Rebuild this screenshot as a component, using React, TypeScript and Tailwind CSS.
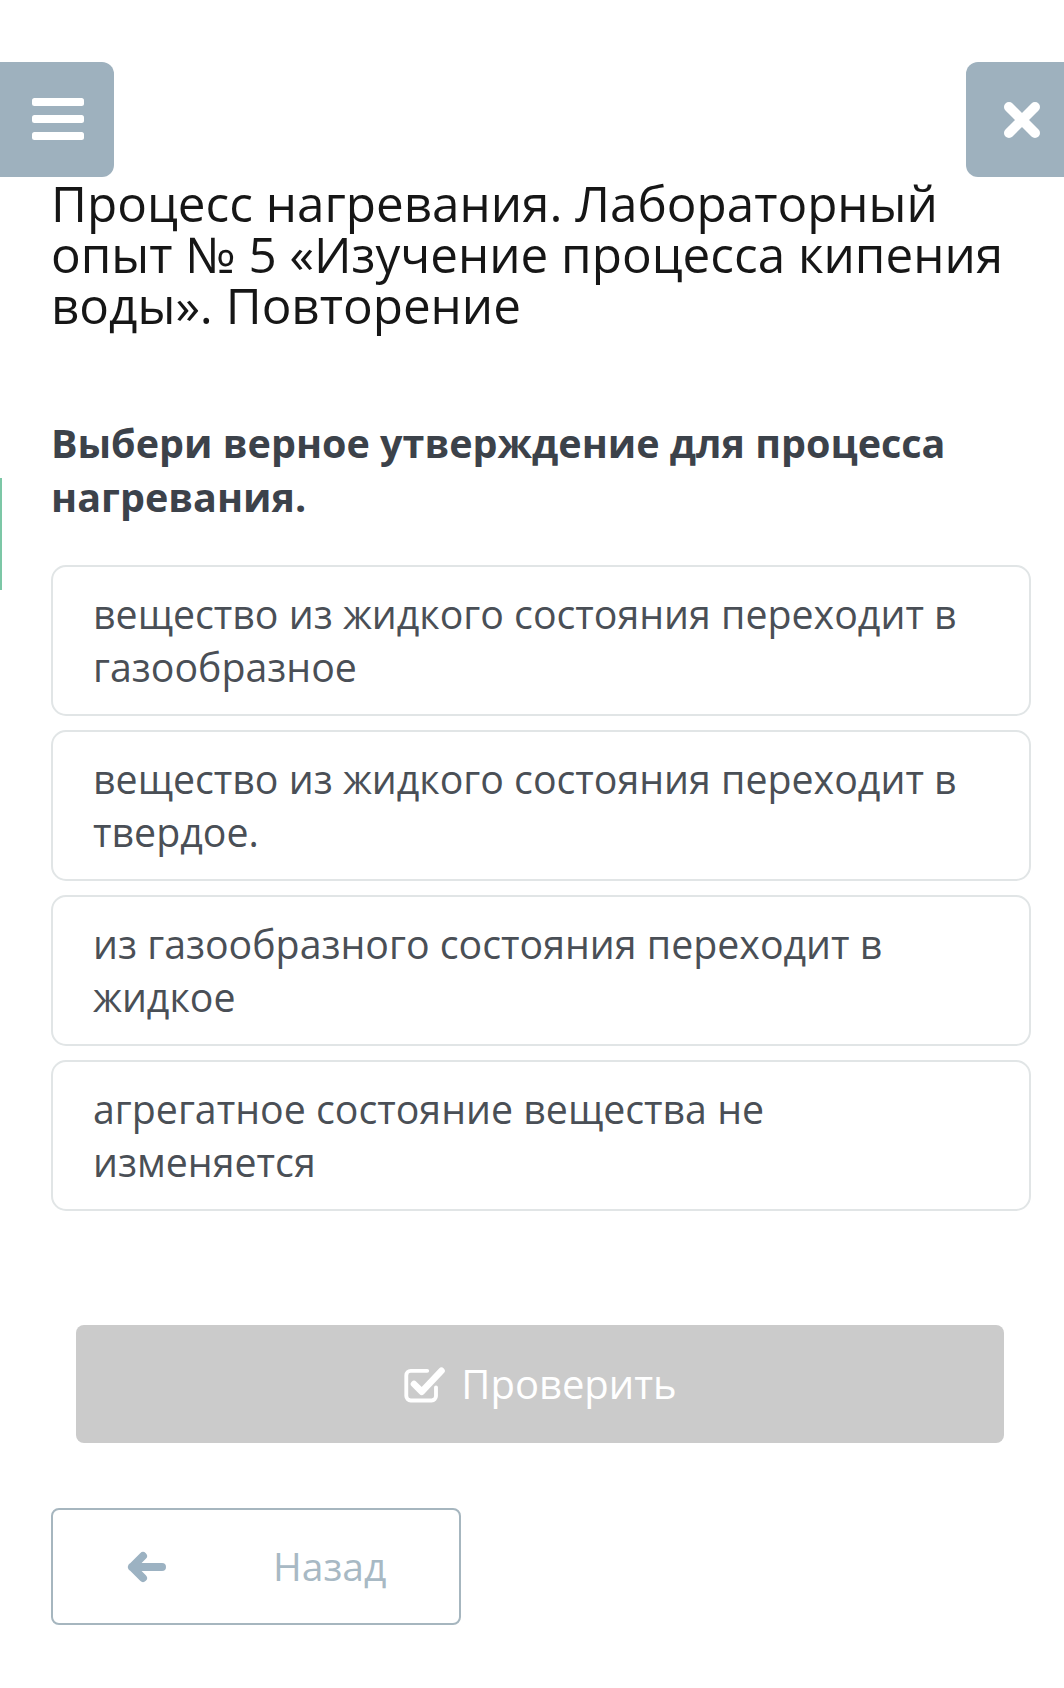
const options = [
  "вещество из жидкого состояния переходит в газообразное",
  "вещество из жидкого состояния переходит в твердое.",
  "из газообразного состояния переходит в жидкое",
  "агрегатное состояние вещества не изменяется",
];

const MenuIcon = () => (
  <svg width="52" height="44" viewBox="0 0 52 44" fill="#ffffff">
    <rect x="0" y="0" width="52" height="8" rx="2.5" />
    <rect x="0" y="17" width="52" height="8" rx="2.5" />
    <rect x="0" y="34" width="52" height="8" rx="2.5" />
  </svg>
);

const CloseIcon = () => (
  <svg width="40" height="40" viewBox="0 0 40 40">
    <path
      d="M7 7 L33 33 M33 7 L7 33"
      stroke="#ffffff"
      strokeWidth="10"
      strokeLinecap="round"
    />
  </svg>
);

const CheckSquare = () => (
  <svg width="44" height="40" viewBox="0 0 40 36" fill="none">
    <path
      d="M30 21 V29 A4 4 0 0 1 26 33 H7 A4 4 0 0 1 3 29 V10 A4 4 0 0 1 7 6 H22"
      stroke="#ffffff"
      strokeWidth="3.5"
      strokeLinecap="round"
    />
    <path
      d="M10 18 L17 25 L35 6"
      stroke="#ffffff"
      strokeWidth="6"
      strokeLinecap="round"
      strokeLinejoin="round"
    />
  </svg>
);

const BackArrow = () => (
  <svg width="40" height="32" viewBox="0 0 40 32" fill="none">
    <path
      d="M16 5 L5 16 L16 27 M5 16 H35"
      stroke="#9cb2c2"
      strokeWidth="8"
      strokeLinecap="round"
      strokeLinejoin="round"
    />
  </svg>
);

export default function App() {
  return (
    <div className="relative w-[1064px] h-[1688px] bg-white font-['Open_Sans',sans-serif] overflow-hidden">
      <div className="absolute left-0 top-[478px] w-[2px] h-[112px] bg-[#7cc7a6]" />
      <div className="flex justify-between pt-[62px]">
        <button className="w-[114px] h-[115px] bg-[#9eb1be] rounded-r-[12px] flex items-center justify-center pl-[2px]">
          <MenuIcon />
        </button>
        <button className="w-[98px] h-[115px] bg-[#9eb1be] rounded-l-[12px] flex items-center justify-center pl-[14px]">
          <CloseIcon />
        </button>
      </div>

      <div className="pl-[51px] pr-[30px]">
        <h1 className="text-[49.4px] leading-[51px] text-[#161616] font-normal">
          Процесс нагревания. Лабораторный опыт № 5 «Изучение процесса кипения
          воды». Повторение
        </h1>
      </div>

      <div className="px-[51px]">
        <h2 className="mt-[86px] text-[39.5px] leading-[54px] font-bold text-[#3c424a]">
          Выбери верное утверждение для процесса нагревания.
        </h2>

        <div className="mt-[41px] flex flex-col gap-[14px] w-[980px]">
          {options.map((o) => (
            <div
              key={o}
              className="h-[151px] border-2 border-[#e1e5e6] rounded-[15px] pl-[40px] pr-[40px] pt-[21px] text-[39.3px] leading-[53px] text-[#4a4f56]"
            >
              {o}
            </div>
          ))}
        </div>
      </div>

      <div className="px-[76px] mt-[114px]">
        <button className="w-[928px] h-[118px] bg-[#cbcbcb] rounded-[8px] flex items-center justify-center gap-[14px] text-white text-[40px]">
          <CheckSquare />
          <span>Проверить</span>
        </button>
      </div>

      <div className="px-[51px] mt-[65px]">
        <button className="w-[410px] h-[117px] border-2 border-[#a6b6bf] rounded-[8px] flex items-center pl-[74px] text-[#a8b9c4] text-[39px]">
          <BackArrow />
          <span className="ml-[106px]">Назад</span>
        </button>
      </div>
    </div>
  );
}
